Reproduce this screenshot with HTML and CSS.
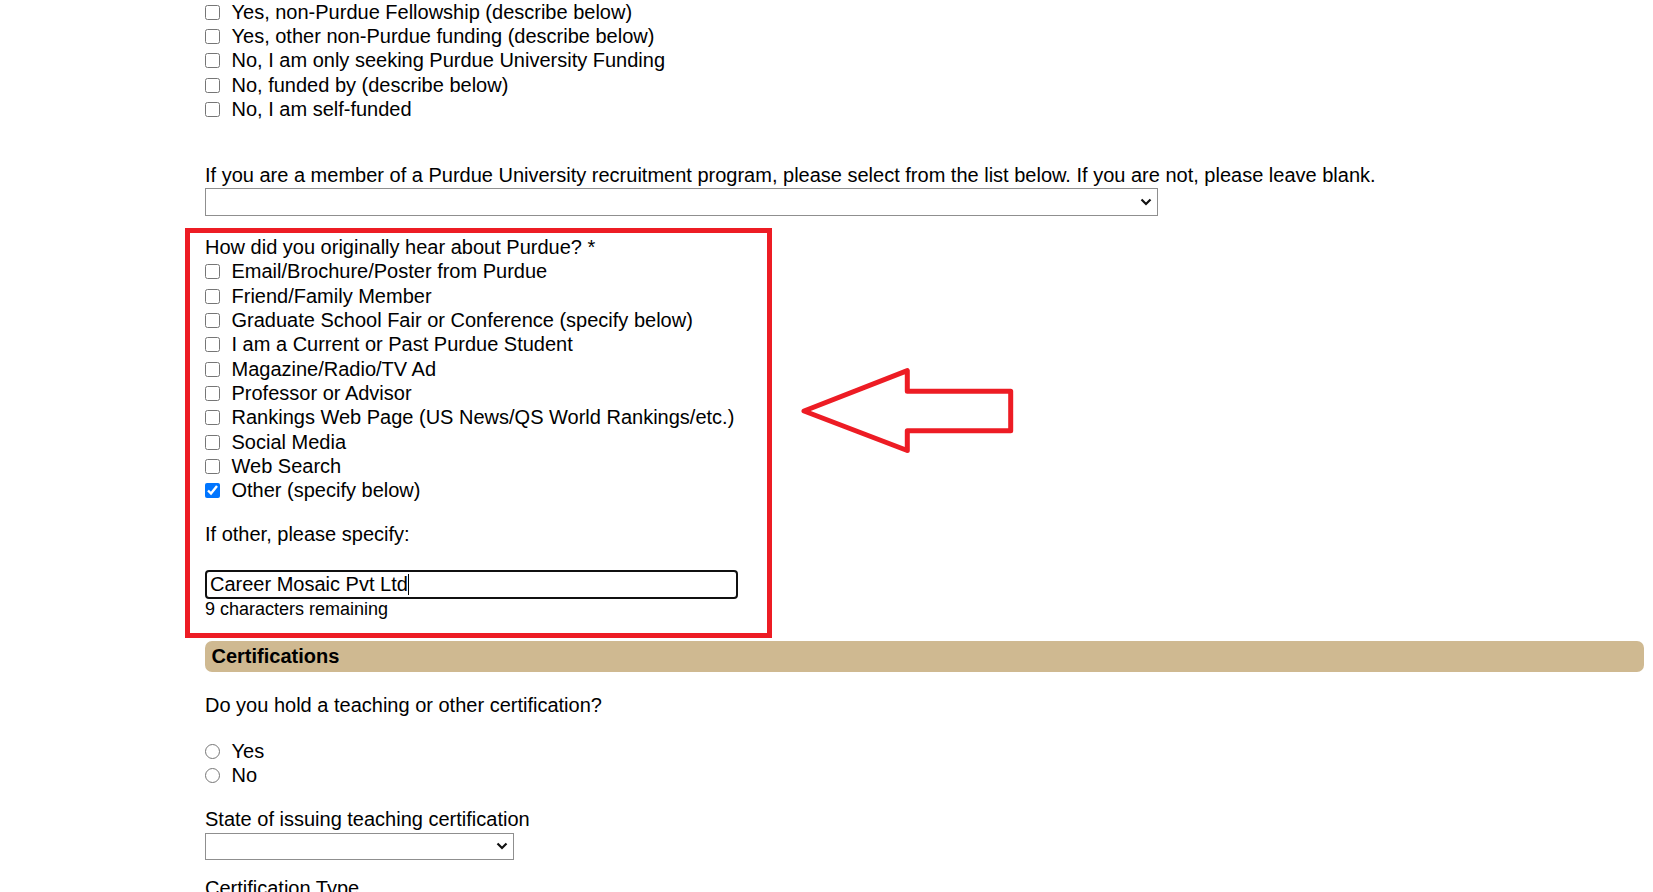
FILE: index.html
```html
<!DOCTYPE html>
<html lang="en">
<head>
    <meta charset="UTF-8">
    <link rel="stylesheet" href="styles.css">
    <title>Application - Funding and Certifications</title>
</head>
<body>
<div class="container">
    <div class="optionList">
        <label class="option"><input class="optionCheck" type="checkbox"/>Yes, non-Purdue Fellowship (describe below)</label>
        <label class="option"><input class="optionCheck" type="checkbox"/>Yes, other non-Purdue funding (describe below)</label>
        <label class="option"><input class="optionCheck" type="checkbox"/>No, I am only seeking Purdue University Funding</label>
        <label class="option"><input class="optionCheck" type="checkbox"/>No, funded by (describe below)</label>
        <label class="option"><input class="optionCheck" type="checkbox"/>No, I am self-funded</label>
    </div>

    <div class="recruitQuestion">If you are a member of a Purdue University recruitment program, please select from the list below. If you are not, please leave blank.</div>
    <div class="selectWrap recruitWrap">
        <select class="selectBox">
            <option></option>
        </select>
        <svg class="chevron" width="12" height="8" viewBox="0 0 12 8">
            <polyline points="1.5,1.5 6,6 10.5,1.5" fill="none" stroke="#111" stroke-width="2.2"/>
        </svg>
    </div>

    <div class="hearBox">
        <div class="hearTitle">How did you originally hear about Purdue? *</div>
        <label class="option"><input class="optionCheck" type="checkbox"/>Email/Brochure/Poster from Purdue</label>
        <label class="option"><input class="optionCheck" type="checkbox"/>Friend/Family Member</label>
        <label class="option"><input class="optionCheck" type="checkbox"/>Graduate School Fair or Conference (specify below)</label>
        <label class="option"><input class="optionCheck" type="checkbox"/>I am a Current or Past Purdue Student</label>
        <label class="option"><input class="optionCheck" type="checkbox"/>Magazine/Radio/TV Ad</label>
        <label class="option"><input class="optionCheck" type="checkbox"/>Professor or Advisor</label>
        <label class="option"><input class="optionCheck" type="checkbox"/>Rankings Web Page (US News/QS World Rankings/etc.)</label>
        <label class="option"><input class="optionCheck" type="checkbox"/>Social Media</label>
        <label class="option"><input class="optionCheck" type="checkbox"/>Web Search</label>
        <label class="option"><input class="optionCheck" type="checkbox" checked/>Other (specify below)</label>

        <div class="otherLabel">If other, please specify:</div>
        <div class="otherInput">Career Mosaic Pvt Ltd<span class="caret"></span></div>
        <div class="remaining">9 characters remaining</div>
    </div>

    <div class="sectionBar">Certifications</div>

    <div class="certQuestion">Do you hold a teaching or other certification?</div>
    <div class="radioList">
        <label class="option"><input class="optionRadio" type="radio" name="cert"/>Yes</label>
        <label class="option"><input class="optionRadio" type="radio" name="cert"/>No</label>
    </div>

    <div class="stateLabel">State of issuing teaching certification</div>
    <div class="selectWrap stateWrap">
        <select class="selectBox">
            <option></option>
        </select>
        <svg class="chevron" width="12" height="8" viewBox="0 0 12 8">
            <polyline points="1.5,1.5 6,6 10.5,1.5" fill="none" stroke="#111" stroke-width="2.2"/>
        </svg>
    </div>

    <div class="typeLabel">Certification Type</div>
</div>

<svg class="arrow" width="216" height="92" viewBox="0 0 216 92">
    <polygon points="4,46 107.3,5.7 107.3,26.3 210.7,26.3 210.7,65.8 107.3,65.8 107.3,85.5"
             fill="none" stroke="#ED1C24" stroke-width="5" stroke-linejoin="round"/>
</svg>
</body>
</html>
```

FILE: styles.css
```css
body {
    margin: 0;
    font-family: "Liberation Sans", Arial, sans-serif;
    font-size: 20px;
    color: #000;
    background: #fff;
}

.container {
    margin: 0 9.5px 0 205px;
}

.option {
    display: flex;
    align-items: center;
    height: 24.3px;
    white-space: nowrap;
}

.optionCheck {
    width: 15px;
    height: 15px;
    margin: 0 11.5px 0 0;
}

.optionRadio {
    width: 15px;
    height: 15px;
    margin: 0 11.5px 0 0;
}

.recruitQuestion {
    margin-top: 43px;
    line-height: 23px;
}

.selectWrap {
    position: relative;
    margin-top: 1px;
}

.recruitWrap {
    width: 953px;
}

.stateWrap {
    width: 309px;
    margin-top: 1.3px;
}

.selectBox {
    display: block;
    width: 100%;
    height: 28px;
    appearance: none;
    -webkit-appearance: none;
    font-family: "Liberation Sans", Arial, sans-serif;
    font-size: 20px;
    border: 1px solid #8f8f8f;
    border-radius: 0;
    background: #fff;
}

.stateWrap .selectBox {
    height: 27.5px;
}

.chevron {
    position: absolute;
    right: 6px;
    top: 50%;
    margin-top: -4px;
    pointer-events: none;
}

.hearBox {
    margin: 12px 0 0 -20px;
    width: 587px;
    box-sizing: border-box;
    border: 5px solid #ED1C24;
    padding: 2px 15px 13.7px 15px;
}

.hearTitle {
    line-height: 24.3px;
}

.otherLabel {
    margin-top: 19.5px;
    line-height: 24.3px;
}

.otherInput {
    margin-top: 23.7px;
    width: 533px;
    height: 28.4px;
    box-sizing: border-box;
    border: 2px solid #101010;
    border-radius: 4px;
    padding: 0 3px;
    line-height: 24px;
}

.caret {
    display: inline-block;
    width: 1px;
    height: 21px;
    background: #000;
    vertical-align: -4px;
}

.remaining {
    margin-top: 1px;
    font-size: 18px;
    line-height: 19.3px;
}

.sectionBar {
    margin-top: 3.3px;
    height: 31.5px;
    line-height: 31.5px;
    background-color: #CFB991;
    border-radius: 7px;
    padding-left: 6.5px;
    font-weight: bold;
}

.certQuestion {
    margin-top: 21.2px;
    line-height: 23px;
}

.radioList {
    margin-top: 22.7px;
}

.stateLabel {
    margin-top: 20.5px;
    line-height: 23px;
}

.typeLabel {
    margin-top: 16.7px;
    line-height: 23px;
}

.arrow {
    position: absolute;
    left: 800px;
    top: 365px;
}
```
